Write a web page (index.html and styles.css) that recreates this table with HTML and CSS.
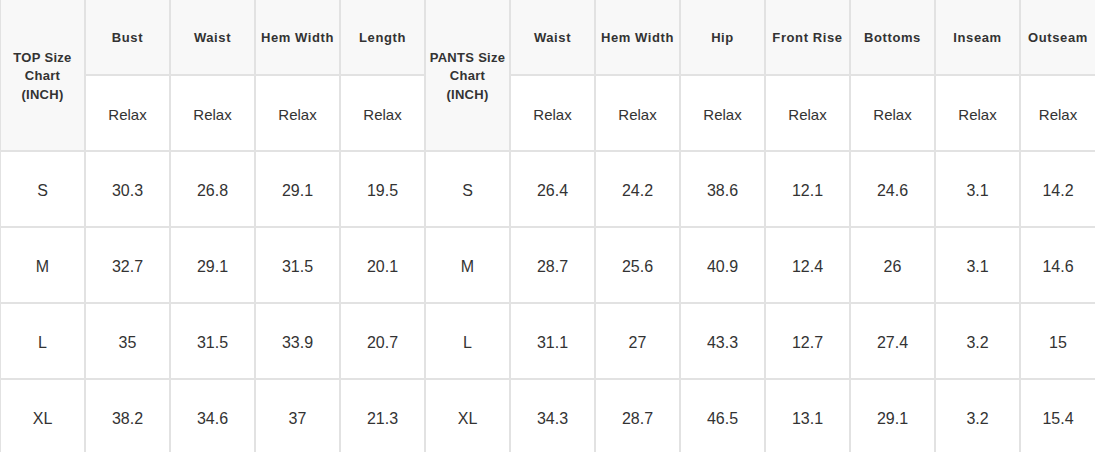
FILE: index.html
```html
<!DOCTYPE html>
<html lang="en">
<head>
<meta charset="utf-8">
<title>Size Chart</title>
<link rel="stylesheet" href="styles.css">
</head>
<body>
<table class="chart">
  <colgroup>
    <col class="c"><col class="c"><col class="c"><col class="c"><col class="c"><col class="c"><col class="c">
    <col class="c"><col class="c"><col class="c"><col class="c"><col class="c"><col class="c-last">
  </colgroup>
  <tbody>
    <tr class="head-row">
      <th class="label" rowspan="2">TOP Size<br>Chart<br>(INCH)</th>
      <th class="head">Bust</th>
      <th class="head">Waist</th>
      <th class="head">Hem Width</th>
      <th class="head">Length</th>
      <th class="label" rowspan="2">PANTS Size<br>Chart<br>(INCH)</th>
      <th class="head">Waist</th>
      <th class="head">Hem Width</th>
      <th class="head">Hip</th>
      <th class="head">Front Rise</th>
      <th class="head">Bottoms</th>
      <th class="head">Inseam</th>
      <th class="head">Outseam</th>
    </tr>
    <tr class="fit-row">
      <td class="fit">Relax</td>
      <td class="fit">Relax</td>
      <td class="fit">Relax</td>
      <td class="fit">Relax</td>
      <td class="fit">Relax</td>
      <td class="fit">Relax</td>
      <td class="fit">Relax</td>
      <td class="fit">Relax</td>
      <td class="fit">Relax</td>
      <td class="fit">Relax</td>
      <td class="fit">Relax</td>
    </tr>
    <tr>
      <td>S</td><td>30.3</td><td>26.8</td><td>29.1</td><td>19.5</td>
      <td>S</td><td>26.4</td><td>24.2</td><td>38.6</td><td>12.1</td><td>24.6</td><td>3.1</td><td>14.2</td>
    </tr>
    <tr>
      <td>M</td><td>32.7</td><td>29.1</td><td>31.5</td><td>20.1</td>
      <td>M</td><td>28.7</td><td>25.6</td><td>40.9</td><td>12.4</td><td>26</td><td>3.1</td><td>14.6</td>
    </tr>
    <tr>
      <td>L</td><td>35</td><td>31.5</td><td>33.9</td><td>20.7</td>
      <td>L</td><td>31.1</td><td>27</td><td>43.3</td><td>12.7</td><td>27.4</td><td>3.2</td><td>15</td>
    </tr>
    <tr>
      <td>XL</td><td>38.2</td><td>34.6</td><td>37</td><td>21.3</td>
      <td>XL</td><td>34.3</td><td>28.7</td><td>46.5</td><td>13.1</td><td>29.1</td><td>3.2</td><td>15.4</td>
    </tr>
  </tbody>
</table>
</body>
</html>
```
FILE: styles.css
```css
html, body {
  margin: 0;
  padding: 0;
  background: #ffffff;
  overflow: hidden;
}

.chart {
  margin-top: -1px;
  width: 1096px;
  table-layout: fixed;
  border-collapse: separate;
  border-spacing: 0;
  font-family: "Liberation Sans", Arial, sans-serif;
  color: #333333;
}

.chart col.c {
  width: 85px;
}

.chart col.c-last {
  width: 76px;
}

.chart th,
.chart td {
  height: 71px;
  padding: 3px 0 0 0;
  border: 1px solid #e2e2e2;
  text-align: center;
  vertical-align: middle;
  box-sizing: content-box;
  font-size: 16px;
  font-weight: normal;
}

.chart th.head,
.chart th.label {
  background: #f8f8f8;
  font-size: 13px;
  font-weight: bold;
  letter-spacing: 0.6px;
  line-height: 18.5px;
  color: #333333;
}

.chart th.label {
  letter-spacing: 0.3px;
}

.chart td.fit {
  font-size: 15px;
}
```
